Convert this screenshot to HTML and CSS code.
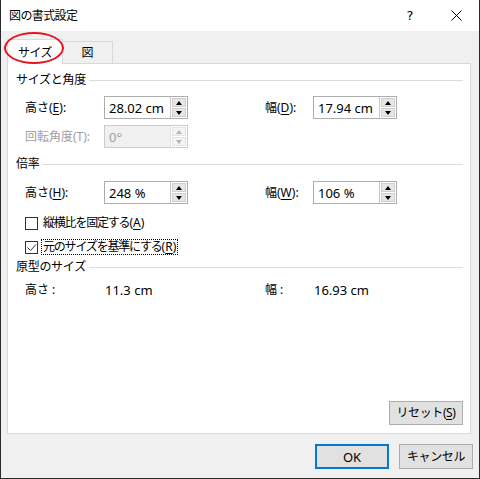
FILE: index.html
```html
<!DOCTYPE html>
<html lang="ja">
<head>
<meta charset="utf-8">
<title>図の書式設定</title>
<link rel="stylesheet" href="styles.css">
</head>
<body>
<div class="window">
  <div class="titlebar">
    <span class="title">図の書式設定</span>
    <span class="help">?</span>
    <span class="close"><svg width="11" height="11" viewBox="0 0 11 11"><path d="M0.5 0.5 L10.5 10.5 M10.5 0.5 L0.5 10.5" stroke="#000" stroke-width="1" fill="none"/></svg></span>
  </div>
  <div class="client">
    <div class="tabs">
      <div class="tab active">サイズ</div>
      <div class="tab">図</div>
      <div class="ring"></div>
    </div>
    <div class="panel">
      <div class="group-head"><span>サイズと角度</span></div>
      <div class="grid first">
        <span class="lbl">高さ(<u>E</u>):</span>
        <div class="spin"><span class="val">28.02 cm</span><span class="arrows"><i class="up"></i><i class="down"></i></span></div>
        <span></span>
        <span class="lbl">幅(<u>D</u>):</span>
        <div class="spin"><span class="val">17.94 cm</span><span class="arrows"><i class="up"></i><i class="down"></i></span></div>
        <span class="lbl disabled">回転角度(T):</span>
        <div class="spin off"><span class="val">0°</span><span class="arrows"><i class="up"></i><i class="down"></i></span></div>
      </div>
      <div class="group-head g2"><span>倍率</span></div>
      <div class="grid third">
        <span class="lbl">高さ(<u>H</u>):</span>
        <div class="spin"><span class="val">248 %</span><span class="arrows"><i class="up"></i><i class="down"></i></span></div>
        <span></span>
        <span class="lbl">幅(<u>W</u>):</span>
        <div class="spin"><span class="val">106 %</span><span class="arrows"><i class="up"></i><i class="down"></i></span></div>
      </div>
      <div class="check c1"><span class="box"></span><span class="ctext">縦横比を固定する<span class="acc">(<u>A</u>)</span></span></div>
      <div class="check c2"><span class="box"><svg width="11" height="11" viewBox="0 0 11 11"><path d="M1.5 5.5 L4.5 8.5 L10 2.5" stroke="#333" stroke-width="1" fill="none"/></svg></span><span class="ctext focus">元のサイズを基準にする<span class="acc">(<u>R</u>)</span></span></div>
      <div class="group-head g3"><span>原型のサイズ</span></div>
      <div class="grid info">
        <span class="lbl">高さ :</span>
        <span class="v">11.3 cm</span>
        <span></span>
        <span class="lbl">幅 :</span>
        <span class="v">16.93 cm</span>
      </div>
      <div class="panel-foot"><button class="btn reset">リセット(<u>S</u>)</button></div>
    </div>
    <div class="buttons">
      <button class="btn ok">OK</button>
      <button class="btn">キャンセル</button>
    </div>
  </div>
</div>
</body>
</html>
```

FILE: styles.css
```css
* { box-sizing: border-box; }
html, body { margin: 0; padding: 0; background: #fff; }
body {
  font-family: "Noto Sans", "Noto Sans CJK JP", sans-serif;
  font-size: 12px;
  line-height: 16px;
  color: #000;
}
u { text-decoration: underline; text-underline-offset: 2px; }

.window {
  width: 480px;
  height: 479px;
  border: 1px solid #2b2b2b;
  border-top: 0;
  display: flex;
  flex-direction: column;
  background: #f0f0f0;
}

.titlebar {
  height: 31px;
  background: #fff;
  display: flex;
  align-items: center;
  padding-left: 8px;
}
.title { flex: 1; font-size: 12px; letter-spacing: -0.6px; }
.help {
  width: 46px;
  text-align: center;
  font-family: "DejaVu Sans", sans-serif;
  font-size: 13px;
  color: #000;
}
.close {
  width: 46px;
  display: flex;
  justify-content: center;
  align-items: center;
}

.client {
  flex: 1;
  display: flex;
  flex-direction: column;
  padding: 0 6px;
}

.tabs {
  margin-top: 8px;
  height: 24px;
  display: flex;
  align-items: flex-end;
  position: relative;
}
.tab {
  height: 22px;
  width: 50px;
  border: 1px solid #d9d9d9;
  border-bottom: 0;
  border-left: 0;
  background: #f0f0f0;
  display: flex;
  align-items: center;
  justify-content: center;
}
.tab.active {
  height: 25px;
  width: 56px;
  border-left: 1px solid #d9d9d9;
  background: #fff;
  margin-bottom: -1px;
  position: relative;
  z-index: 1;
  padding-top: 2px;
  letter-spacing: -0.5px;
}
.ring {
  position: absolute;
  left: -3px;
  top: -7px;
  width: 60px;
  height: 32px;
  border: 2px solid #e5141d;
  border-radius: 50%;
  z-index: 2;
}

.panel {
  width: 464px;
  height: 371px;
  background: #fff;
  border: 1px solid #d9d9d9;
  display: flex;
  flex-direction: column;
}

.group-head {
  margin: 8px 7px 0 8px;
  height: 16px;
  display: flex;
  align-items: center;
  gap: 3px;
}
.group-head span { letter-spacing: -0.3px; }
.group-head::after {
  content: "";
  flex: 1;
  height: 1px;
  background: #dcdcdc;
}
.group-head.g2 { margin-top: 8px; }
.group-head.g3 { margin-top: 4px; }

.grid {
  display: grid;
  grid-template-columns: 79px 84px 77px 48px 84px;
  row-gap: 6px;
  padding-left: 17px;
  align-items: center;
}
.grid.first { margin-top: 8px; }
.grid.third { margin-top: 9px; }
.grid.info { margin-top: 7px; }
.grid.info .v { padding-left: 1px; font-size: 13px; }

.lbl { white-space: nowrap; }
.lbl.disabled { color: #a0a0a0; }

.spin {
  height: 23px;
  border: 1px solid #adadad;
  display: flex;
  align-items: center;
  background: #fff;
}
.spin .val { flex: 1; padding-left: 4px; font-size: 13px; }
.spin .arrows {
  align-self: stretch;
  width: 17px;
  margin: 0;
  border-left: 1px solid #c8c8c8;
  display: flex;
  flex-direction: column;
  padding: 1px;
  gap: 1px;
}
.spin .arrows i {
  flex: 1;
  background: #e6e6e6;
  border: 1px solid #cfcfcf;
  position: relative;
}
.spin .arrows i::after {
  content: "";
  position: absolute;
  left: 50%;
  top: 50%;
  transform: translate(-50%, -50%);
  width: 0;
  height: 0;
  border-left: 3.5px solid transparent;
  border-right: 3.5px solid transparent;
}
.spin .arrows i.up::after { border-bottom: 4px solid #000; }
.spin .arrows i.down::after { border-top: 4px solid #000; }
.spin.off { background: #f0f0f0; border-color: #cccccc; }
.spin.off .val { color: #a0a0a0; }
.spin.off .arrows { background: #fff; border-left-color: #e0e0e0; }
.spin.off .arrows i { background: #f4f4f4; border-color: #e3e3e3; }
.spin.off .arrows i.up::after { border-bottom-color: #b5b5b5; }
.spin.off .arrows i.down::after { border-top-color: #b5b5b5; }

.check {
  display: flex;
  align-items: center;
  height: 16px;
  padding-left: 17px;
}
.check.c1 { margin-top: 11px; }
.check.c2 { margin-top: 8px; }
.check .box {
  width: 13px;
  height: 13px;
  border: 1px solid #333;
  background: #fff;
  display: flex;
  align-items: center;
  justify-content: center;
  margin-right: 3px;
}
.check .ctext {
  padding: 0 1px;
  border: 1px dotted transparent;
  line-height: 14px;
  letter-spacing: -1.2px;
}
.check .ctext .acc { letter-spacing: 0; }
.check .ctext.focus { border-color: #000; }

.panel-foot {
  margin-top: auto;
  display: flex;
  justify-content: flex-end;
  padding: 0 7px 8px 0;
}

.btn {
  font-family: "Noto Sans", "Noto Sans CJK JP", sans-serif;
  font-size: 12px;
  line-height: 16px;
  color: #000;
  background: #e1e1e1;
  border: 1px solid #adadad;
  border-radius: 0;
  padding: 0;
  margin: 0;
  width: 74px;
  height: 25px;
  letter-spacing: -0.4px;
}
.btn.reset { width: 74px; height: 24px; }
.btn.ok { width: 74px; border: 2px solid #0078d7; font-size: 13px; letter-spacing: 0; }

.buttons {
  margin-top: 10px;
  display: flex;
  justify-content: flex-end;
  gap: 10px;
}
```
